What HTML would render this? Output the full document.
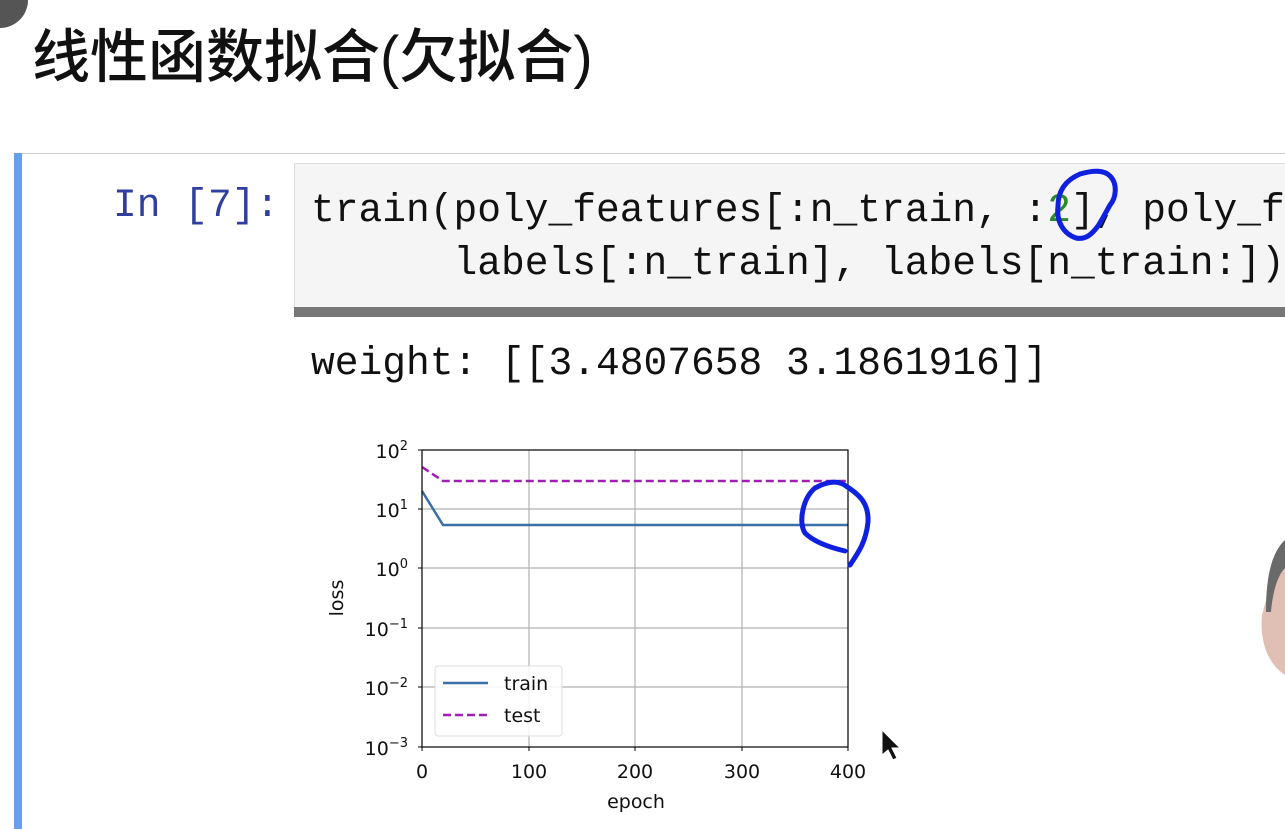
<!DOCTYPE html>
<html><head><meta charset="utf-8"><style>
html,body{margin:0;padding:0;background:#fff;width:1285px;height:829px;overflow:hidden;position:relative}
#wrap{position:absolute;left:0;top:0;width:1285px;height:829px;overflow:hidden}
.mono{font-family:"Liberation Mono",monospace;font-size:39.6px;position:absolute;white-space:pre;color:#111}
</style></head><body><div id="wrap">
<div style="position:absolute;left:-28px;top:-28px;width:56px;height:56px;border-radius:50%;background:#555"></div>
<div style="position:absolute;left:32px;top:20px;font-family:'Liberation Sans','Noto Sans CJK SC',sans-serif;font-size:58px;line-height:76px;color:#111;white-space:nowrap;font-weight:500">线性函数拟合(欠拟合)</div>
<div style="position:absolute;left:14px;top:153px;width:1271px;height:1px;background:#d0d0d0"></div>
<div style="position:absolute;left:14px;top:153px;width:8px;height:676px;background:#64a0ee"></div>
<div style="position:absolute;left:294px;top:163px;width:991px;height:145px;background:#f5f5f5;border-top:1px solid #ddd;border-left:1px solid #ddd"></div>
<div style="position:absolute;left:294px;top:307px;width:991px;height:10px;background:#777"></div>
<div class="mono" style="left:113px;top:183px;color:#303f9f">In [7]:</div>
<div class="mono" style="left:311px;top:188px">train(poly_features[:n_train, :<span style="color:#2a8a2a">2</span>], poly_features[n_train:, :2],</div>
<div class="mono" style="left:311px;top:241px">      labels[:n_train], labels[n_train:])</div>
<div class="mono" style="left:311px;top:341px">weight: [[3.4807658 3.1861916]]</div>
<svg width="1285" height="829" style="position:absolute;left:0;top:0" font-family="DejaVu Sans, sans-serif">
<g stroke="#b0b0b0" stroke-width="1.2">
<line x1="529" y1="450" x2="529" y2="747"/><line x1="635" y1="450" x2="635" y2="747"/><line x1="742" y1="450" x2="742" y2="747"/>
<line x1="422" y1="509" x2="848" y2="509"/><line x1="422" y1="568" x2="848" y2="568"/><line x1="422" y1="628" x2="848" y2="628"/><line x1="422" y1="687" x2="848" y2="687"/>
</g>
<polyline points="422,467 443,481 848,481" fill="none" stroke="#a020b0" stroke-width="2.5" stroke-dasharray="8,4"/>
<polyline points="422,491 443,525 848,525" fill="none" stroke="#3a6fa8" stroke-width="2.5"/>
<rect x="422" y="450" width="426" height="297" fill="none" stroke="#000" stroke-width="1.2"/>
<g stroke="#000" stroke-width="1"><line x1="418" y1="450" x2="422" y2="450"/><line x1="418" y1="509" x2="422" y2="509"/><line x1="418" y1="568" x2="422" y2="568"/><line x1="418" y1="628" x2="422" y2="628"/><line x1="418" y1="687" x2="422" y2="687"/><line x1="418" y1="747" x2="422" y2="747"/>
<line x1="422" y1="747" x2="422" y2="751"/><line x1="529" y1="747" x2="529" y2="751"/><line x1="635" y1="747" x2="635" y2="751"/><line x1="742" y1="747" x2="742" y2="751"/><line x1="848" y1="747" x2="848" y2="751"/></g>
<rect x="435" y="666" width="127" height="70" rx="3" fill="#fff" fill-opacity="0.85" stroke="#ddd"/>
<line x1="443" y1="683" x2="488" y2="683" stroke="#3a6fa8" stroke-width="2.5"/>
<line x1="443" y1="715" x2="488" y2="715" stroke="#a020b0" stroke-width="2.5" stroke-dasharray="8,4"/>
<g font-size="19" fill="#111">
<text x="504" y="690">train</text><text x="504" y="722">test</text>
<g text-anchor="end"><text x="408" y="458">10<tspan font-size="13" dy="-8">2</tspan></text>
<text x="408" y="517">10<tspan font-size="13" dy="-8">1</tspan></text>
<text x="408" y="576">10<tspan font-size="13" dy="-8">0</tspan></text>
<text x="408" y="636">10<tspan font-size="13" dy="-8">−1</tspan></text>
<text x="408" y="695">10<tspan font-size="13" dy="-8">−2</tspan></text>
<text x="408" y="755">10<tspan font-size="13" dy="-8">−3</tspan></text></g>
<g text-anchor="middle"><text x="422" y="778">0</text><text x="529" y="778">100</text><text x="635" y="778">200</text><text x="742" y="778">300</text><text x="848" y="778">400</text>
<text x="636" y="808">epoch</text>
<text transform="translate(343,598) rotate(-90)">loss</text></g>
</g>
<path d="M845,551 C832,548 815,543 805,533 C798,522 803,498 815,488 C828,481 838,480 846,486 C858,494 869,502 868,522 C866,542 858,553 850,565" fill="none" stroke="#1020e0" stroke-width="5" stroke-linecap="round"/>
<path d="M1098,226 C1092,234 1086,240 1076,238 C1064,234 1056,222 1058,206 C1058,190 1066,180 1080,174 C1094,170 1104,170 1110,176 C1118,184 1116,198 1110,205 C1106,212 1102,220 1098,226" fill="none" stroke="#1020e0" stroke-width="5" stroke-linecap="round"/>
<path d="M882,730 L882,755 L888,750 L893,760 L897,758 L892,748 L900,748 Z" fill="#111" stroke="#fff" stroke-width="1"/>
<path d="M1285,540 C1275,552 1268,570 1266,600 L1262,615 C1260,640 1266,662 1285,675 Z" fill="#e0c0b4"/>
<path d="M1285,540 C1272,552 1266,575 1266,612 L1271,612 C1273,590 1278,575 1285,568 Z" fill="#6a6a6a"/>
</svg>
</div></body></html>
